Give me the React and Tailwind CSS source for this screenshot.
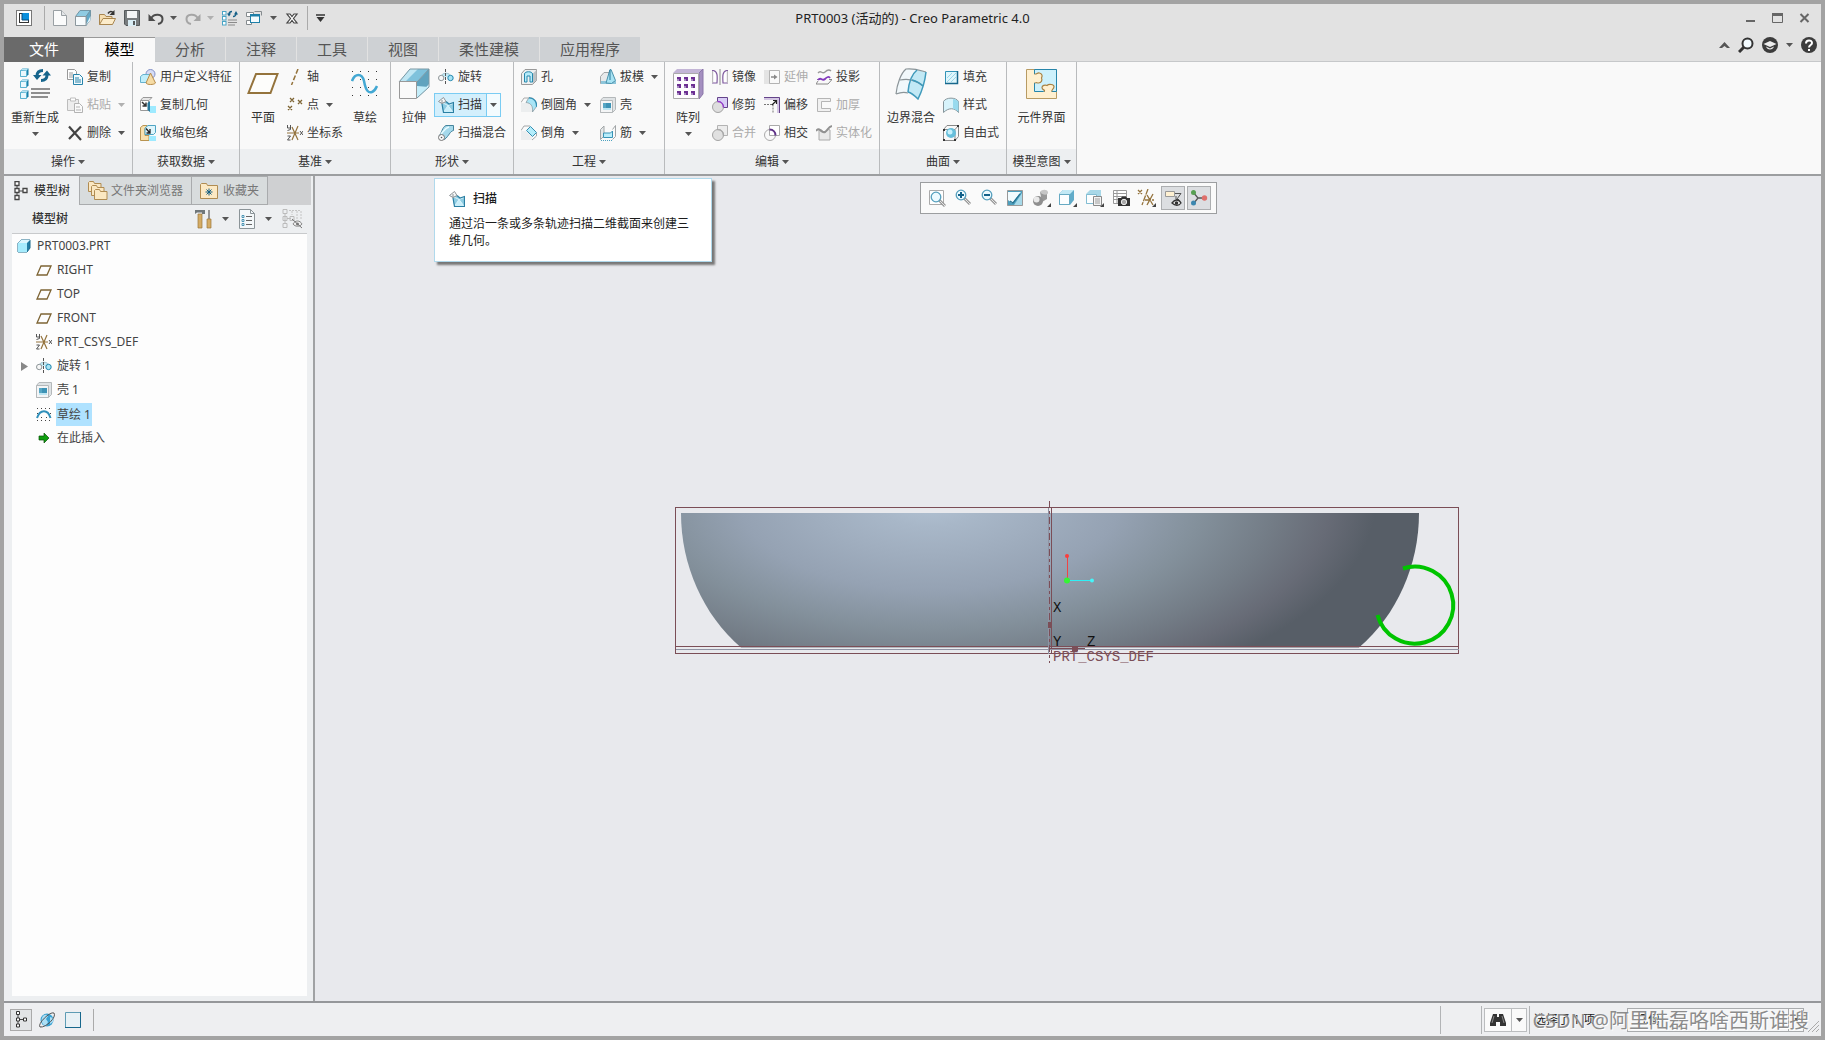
import React from "react";

const Svg = ({ w = 16, h = 16, children, ...rest }) => (
  <svg width={w} height={h} viewBox={`0 0 ${w} ${h}`} fill="none" className="shrink-0" aria-hidden="true" {...rest}>
    {children}
  </svg>
);

const Caret = ({ dim }) => (
  <Svg w={7} h={4}>
    <path d="M0 0h7L3.5 4z" fill={dim ? "#b0b0b0" : "#555"} />
  </Svg>
);

/* ---------- title bar icons ---------- */
const AppIcon = () => (
  <Svg>
    <rect x=".5" y=".5" width="15" height="15" fill="#fff" stroke="#777" />
    <rect x="3.5" y="3.5" width="9" height="9" fill="#fff" stroke="#333" />
    <path d="M6 3h7v7H6z" fill="#0a8fdc" />
    <path d="M6 3v7h7" stroke="#0c4a78" />
  </Svg>
);
const NewIcon = () => (
  <Svg w={14} h={16}>
    <path d="M.5.5h8l5 5v10H.5z" fill="#fbfbfb" stroke="#9aa0a4" />
    <path d="M8.5.5v5h5" fill="#e4e6e8" stroke="#9aa0a4" />
  </Svg>
);
const CubeOpen = () => (
  <Svg>
    <path d="M.5 6.500 5 .500h10.500L11 6.500z" fill="#8fcbe2" stroke="#7296a6" />
    <path d="M11 6.500 15.500.500v9L11 15.500z" fill="#62a9c8" stroke="#7296a6" />
    <path d="M.5 6.500H11v9H.5z" fill="#f7fbfd" stroke="#8c979d" />
    <path d="M11 15 15.500 6v4z" fill="#e6f6fc" />
  </Svg>
);
const FolderOpen = () => (
  <Svg w={17} h={16}>
    <path d="M.5 14.500v-10h5l1.500 2h6v8z" fill="#f5ddb0" stroke="#a98650" />
    <path d="M.5 14.500 4 8.500h12.500l-3 6z" fill="#fceccb" stroke="#a98650" />
    <path d="M9 3.500c1.500-2.500 4-2.500 5.500-.5" stroke="#333" strokeWidth="1.500" />
    <path d="M15.500 0v5h-5z" fill="#333" />
  </Svg>
);
const SaveIcon = () => (
  <Svg>
    <path d="M.5.5h15v15H2L.5 14z" fill="#787c7e" stroke="#55595b" />
    <path d="M3 1h10v7H3z" fill="#f4f5f6" />
    <path d="M4 10h8v6H4z" fill="#d9edf5" />
    <path d="M9 11h2v4H9z" fill="#55595b" />
  </Svg>
);
const Undo = ({ flip, color }) => (
  <Svg>
    <g transform={flip ? "translate(16 0) scale(-1 1)" : undefined}>
      <path d="M3 8.500C6 3 14.500 4 14.500 9c0 3-2 4.500-4.500 5" stroke={color} strokeWidth="2" />
      <path d="M.5 4v7h7z" fill={color} />
    </g>
  </Svg>
);
const RegenSmall = () => (
  <Svg>
    {[1, 6, 11].map((y) => (
      <rect key={y} x=".5" y={y + 0.5} width="3.500" height="3.500" fill="#fff" stroke="#4aa5c6" />
    ))}
    <path d="M6 10h9M6 12.500h9M6 15h7" stroke="#8a8a8a" />
    <path d="M7 4a3 3 0 0 1 3-2.500M14 4a3 3 0 0 1-3 2.500" stroke="#145f86" strokeWidth="1.500" />
    <path d="M5 3.500h4L7 6.500zM12 4.500h4L14 1z" fill="#145f86" />
  </Svg>
);
const Windows = () => (
  <Svg>
    <path d="M.5 2.500h7v4h-7zM.5 10.500h5v4h-5z" fill="#fff" stroke="#858b8e" />
    <path d="M8.500 1.500h7v4" stroke="#858b8e" />
    <rect x="4.500" y="4.500" width="9" height="8" fill="#f3fbfe" stroke="#1d7fa8" />
    <path d="M4 5h10v1.500H4z" fill="#1d7fa8" />
  </Svg>
);
const CloseWin = () => (
  <Svg w={14} h={14}>
    <path d="M2 3h3l2 2.500L9 3h3L8.500 7.500 12 12H9L7 9.500 5 12H2l3.500-4.500z" fill="#fff" stroke="#444" strokeWidth="1.200" />
  </Svg>
);

/* ---------- ribbon: large icons ---------- */
const MiniCube = ({ x = 0, y = 0 }) => (
  <g transform={`translate(${x} ${y})`}>
    <path d="M.5 2.500 2.500.5h6v6l-2 2h-6z" fill="#1b80a8" />
    <path d="M.5 2.500h6v6h-6z" fill="#e9f8fd" stroke="#5bb2d0" />
    <path d="M1 2 2.500.5h6L6.500 2.500z" fill="#b6e4f3" />
  </g>
);
const Regen = () => (
  <Svg w={32} h={32}>
    <MiniCube y={0} x={1} />
    <MiniCube y={11} x={1} />
    <MiniCube y={22} x={1} />
    <path d="M12 21h19M12 25h19M12 29h17" stroke="#8f8f8f" strokeWidth="2" />
    <path d="M18 8c0-3.500 2-5.500 6-5.500M28 7c0 3.500-2 5.500-6 5.500" stroke="#16658c" strokeWidth="3" />
    <path d="M14 7h8.500L18 12zM23.500 7.500H32l-4-5z" fill="#16658c" />
  </Svg>
);
const Plane = () => (
  <Svg w={32} h={32}>
    <path d="M9 6h21.500l-7 19H1.500z" fill="#fdfdfb" stroke="#94733c" strokeWidth="2" />
  </Svg>
);
const dots = [0, 1, 2, 3].flatMap((r) => [0, 1, 2, 3].map((c) => [c, r]));
const SketchLarge = () => (
  <Svg w={28} h={28}>
    {dots.map(([c, r]) => (
      <rect key={`${c}-${r}`} x={1 + c * 8} y={1 + r * 8} width="1" height="1" fill="#333" />
    ))}
    <path d="M1 11C4 3 11 3 13 11c2 11 5 12 8 11 3-1 4-4 5-6" stroke="#43a8d3" strokeWidth="2.500" />
  </Svg>
);
const Extrude = () => (
  <Svg w={32} h={32}>
    <path d="M1 14 12 1h19L19 14z" fill="#7fc2dc" />
    <path d="M1 14 12 1h8L7 14z" fill="#bfe6f3" />
    <path d="M19 14 31 1v18L19 30z" fill="#60a3be" />
    <path d="M19 30 31 16v3z" fill="#e1f6fd" />
    <path d="M19 18 31 19 19 30z" fill="#c5eefa" />
    <path d="M1 14 12 1h19v18L19 30M19 14 31 1" stroke="#7a98a4" />
    <path d="M1.500 13.500h17v17h-17z" fill="#fafafa" stroke="#999" />
  </Svg>
);
const Pattern = () => (
  <Svg w={32} h={32}>
    <path d="M1 5 5 1h26l-4 4z" fill="#c3b5d6" />
    <path d="M27 5 31 1v25l-4 5z" fill="#a48fc0" stroke="#8b76a9" />
    <path d="M1.500 5.500h25v25h-25z" fill="#fdfcfe" stroke="#aaa" />
    {[9, 16, 23].flatMap((y) =>
      [5, 12, 19].map((x) => <path key={`${x}${y}`} d={`M${x} ${y}h4v4h-2v-2h-2z`} fill="#6c2f93" />)
    )}
    {[9, 16, 23].flatMap((y) =>
      [5, 12, 19].map((x) => <path key={`s${x}${y}`} d={`M${x} ${y + 2}h2v2h-2z`} fill="#a88cc2" />)
    )}
  </Svg>
);
const Blend = () => (
  <Svg w={34} h={32}>
    <path d="M2 26C3 16 7 5 12 1c8-1 13 1 20 3-1 9-4 19-8 27-6-6-13-8-22-5z" fill="#f1f8fb" />
    <path d="M14 24C15 13 18 6 23 2l9 2c-1 9-4 19-8 27-3-3-6-6-10-7z" fill="#c2e9f5" />
    <path d="M2 26C3 16 7 5 12 1c8-1 13 1 20 3M6 12c9-2 16 0 23 6M2 26c5-2 9-2 12-1" stroke="#8b9498" strokeWidth="1.200" />
    <path d="M14 24c4 1 7 4 10 7 4-8 7-18 8-27M14 24C15 13 18 6 23 2M18 12c4 1 8 3 11 6" stroke="#3f9abb" strokeWidth="1.500" />
  </Svg>
);
const Puzzle = () => (
  <Svg w={32} h={32}>
    <path d="M1.500 1.500h30v29h-30z" fill="#fff0d0" stroke="#b89b63" />
    <path d="M9.500 1.500h22v22h-5v0h-8v0h-9z" fill="#cdf1fc" stroke="#2785aa" />
    <path d="M9.500 6c2 1 3-2 5-1 3 1 3 3 2 5 1 2 0 5-3 5-2 0-2-1-4 0M19 23.500c2-2-2-1-2-4 0-2 3-3 5-2 2-2 7-1 7 1 0 3-3 3-2 5" fill="#fff0d0" stroke="#a98242" strokeWidth="1.200" />
    <path d="M9.500 6.500v8M20 23.500h6" stroke="#fff0d0" strokeWidth="2" />
  </Svg>
);

/* ---------- ribbon: small icons ---------- */
const Copy = () => (
  <Svg>
    <path d="M.5.5h7l2 2v8h-9z" fill="#fff" stroke="#999" />
    <path d="M2 4h4M2 6h4M2 8h4" stroke="#999" />
    <path d="M6.500 5.500h6l3 3v7h-9z" fill="#f2fafd" stroke="#2683aa" />
    <path d="M8 9h4M8 11h6M8 13h6" stroke="#2683aa" />
  </Svg>
);
const Paste = () => (
  <Svg>
    <path d="M.5 2.500h11v11H.5z" fill="#ededed" stroke="#bdbdbd" />
    <path d="M3.500 1h5v3h-5z" fill="#fff" stroke="#bdbdbd" />
    <path d="M7.500 6.500h5l3 3v6h-8z" fill="#fafafa" stroke="#b3b3b3" />
    <path d="M9 10h4M9 13h5" stroke="#b3b3b3" />
  </Svg>
);
const Delete = () => (
  <Svg>
    <path d="M2 1.500 14 15M14 1.500 2 14" stroke="#444" strokeWidth="2.200" />
  </Svg>
);
const Udf = () => (
  <Svg>
    <circle cx="10.500" cy="5" r="4.500" fill="#d5dcf6" stroke="#8290c6" />
    <path d="M.5 7.500 3 5.500h7v6l-2 2H.5z" fill="#bfeefb" stroke="#66b2cf" />
    <path d="M10.500 4 6 14c1 2 8 2 9.500 0z" fill="#f6dca5" stroke="#b68b4a" />
  </Svg>
);
const CopyGeom = () => (
  <Svg>
    <path d="M.5 3.500 3 .5h9l-3 3z" fill="#e6e6e6" stroke="#999" />
    <path d="M.5 3.500h8v10h-8z" fill="#fff" stroke="#999" />
    <path d="M2 5l4 4M6 5.500V9H2.500" stroke="#333" strokeWidth="1.500" />
    <path d="M10 9h6v7h-6z" fill="#9eeaff" />
    <path d="M7.500 6 10 4v11l-2.500-2z" fill="#27799d" />
  </Svg>
);
const Shrink = () => (
  <Svg>
    <path d="M.5 2.500 3 .5h4v3H5v7h4v5H.5z" fill="#f8e0ad" stroke="#b99451" />
    <path d="M5 3 8 .5h7.500v7l-2 2H5z" fill="#def5fc" stroke="#4ea4c3" />
    <path d="M6 3.500 10 8M10 4v4H6.500" stroke="#222" strokeWidth="1.300" />
    <path d="M9 11h7v5H9z" fill="#9eeaff" />
  </Svg>
);
const Axis = () => (
  <Svg>
    <path d="M11 0 4.500 16" stroke="#94733c" strokeWidth="1.500" strokeDasharray="5 2" />
  </Svg>
);
const Points = () => (
  <Svg>
    <path d="M3 1l4 4M7 1 3 5M11 3l4 4M15 3l-4 4M1 9l4 4M5 9l-4 4" stroke="#7e6534" strokeWidth="1.300" />
  </Svg>
);
const Csys = () => (
  <Svg>
    <path d="M0 8h12M5 2l6 13M11 1 5 15" stroke="#94733c" strokeWidth="1.200" />
    <path d="M.5 0v3h3M3.500 0v4.500l-3 1M13 6l3 4M16 6l-3 4M.5 11h3l-3 4h3" stroke="#444" strokeWidth=".9" />
  </Svg>
);
const Revolve = () => (
  <Svg>
    <path d="M3 8c0-5 10-5 10 0" fill="#c3eaf5" stroke="#9fc2ce" />
    <circle cx="3.200" cy="9" r="2.700" fill="#f7f7f7" stroke="#8e9699" />
    <circle cx="12.500" cy="9" r="2.700" fill="#a8e4f5" stroke="#2387ae" />
    <path d="M7.500 0v16" stroke="#555" strokeDasharray="3 1" />
  </Svg>
);
const Sweep = () => (
  <Svg>
    <path d="M4 5.500 8 4.500l3 3 4.500-1.500v9.500H5.500L4 10z" fill="#8fcde3" />
    <path d="M10 8.500 15 15H6z" fill="#c9eefa" />
    <path d="M4 5.500 10 8.500 15 6.500M10 8.500 5.500 15M10 8.500l5 6.500" stroke="#e7f9fe" strokeWidth=".8" />
    <path d="M8 4.500l3 2.500 4.500-1.500v10h-10L4 7" stroke="#2a7fa3" strokeWidth="1.200" />
    <path d="M.5 4.500 5.500.5 8 4.500 4 6.500z" fill="#f6f8f9" stroke="#8e9396" />
    <path d="M4 3v4" stroke="#8e9396" />
  </Svg>
);
const SweptBlend = () => (
  <Svg>
    <path d="M1 11C4 8 4 2 8 .5h7.500v5c-4 1-4 5-9 9z" fill="#a5d9eb" stroke="#46849c" />
    <path d="M3 9c3-3 4-6 8-7" stroke="#e8fbff" strokeWidth="1.500" />
    <circle cx="3.500" cy="12.500" r="3" fill="#fafafa" stroke="#777" />
    <circle cx="3.500" cy="12.500" r=".8" fill="#555" />
  </Svg>
);
const Hole = () => (
  <Svg>
    <path d="M.5 4.500 4 .5h11.500v11l-4 4H.5z" fill="#eef0f1" stroke="#999" />
    <path d="M11.500 5 15.500 1v10l-4 4z" fill="#bcc2c5" />
    <path d="M3.500 13V5c0-3 8-3 8 0v8H9V7H6v6z" fill="#b6ebfa" stroke="#2788ad" />
  </Svg>
);
const Round = () => (
  <Svg>
    <path d="M0 6h7c3 1 4 4 4 9H0z" fill="#eceeef" />
    <path d="M0 5.500 3 1h5" stroke="#aaa" />
    <path d="M5 5.500 8 .5c5 0 8 4 7.500 9L11.500 15C12 9 10 6 5 5.500z" fill="#a9e5f6" stroke="#8a9ba2" strokeWidth=".8" />
    <path d="M8 .8c5 0 8 4 7.500 9" stroke="#318fb4" strokeWidth="1.300" />
  </Svg>
);
const Chamfer = () => (
  <Svg>
    <path d="M0 6h5l6 6v3H0z" fill="#eceeef" />
    <path d="M0 5.500 3 1h6M11 15l4.500-4V8" stroke="#a3a7a9" />
    <path d="M5.500 5.500 9.500 1.500l6 6-4 4z" fill="#b3edfb" stroke="#358fb2" />
  </Svg>
);
const Draft = () => (
  <Svg>
    <path d="M.5 7.500 4 3.500h5v11H.5z" fill="#e8eaeb" stroke="#a1a5a7" />
    <path d="M1 12h15v3H1z" fill="#8dc5da" />
    <path d="M6 14 10 .5h1l4.500 11-4 3z" fill="#a8e3f4" stroke="#4a91ab" />
    <path d="M10 1v10" stroke="#2a7898" />
  </Svg>
);
const Shell = () => (
  <Svg>
    <path d="M.5 3.500 3 .5h12.500v12l-3 3H.5z" fill="#dfe3e5" stroke="#b4b8ba" />
    <path d="M.5 3.500h12v12H.5z" fill="#f4f5f6" stroke="#b4b8ba" />
    <path d="M3 6h8v7H3z" fill="#57a6c4" />
    <path d="M6 6h5v5H6z" fill="#3d93b6" />
    <path d="M3 11h8v2H3z" fill="#bce4f1" />
  </Svg>
);
const Rib = () => (
  <Svg>
    <path d="M.5 4.500 4 1v10L.5 14.500z" fill="#e4e7e8" stroke="#a1a5a7" />
    <path d="M12.500 4.500l3-4v11l-3 3" stroke="#a1a5a7" />
    <path d="M3.500 12.500V8h7l2-2v6.500z" fill="#b9edfa" stroke="#3892b5" />
    <path d="M1 15.500h12" stroke="#4da2c0" strokeDasharray="1 1" />
  </Svg>
);
const Mirror = () => (
  <Svg>
    <path d="M.5 1.500h1c4 1 4 5 3.500 12.500H.5zM15.500 1.500h-1c-4 1-4 5-3.500 12.500h4.500z" fill="#fff" stroke="#7f5a9f" strokeWidth="1.200" />
    <path d="M.5 2v12M15.500 2v12" stroke="#bbb" />
    <path d="M8 0v16" stroke="#888" />
  </Svg>
);
const Trim = ({ gray }) => (
  <Svg>
    <path d="M5.500.5h10v10h-10z" fill={gray ? "#ececec" : "#d8ccf6"} stroke={gray ? "#b3b3b3" : "#64438a"} />
    <circle cx="6" cy="10" r="5.500" fill={gray ? "#e0e0e0" : "#dedede"} stroke="#a3a3a3" />
    <path d="M5.500 4.500c4 0 6 3 6 6" stroke={gray ? "#aaa" : "#9435cf"} strokeWidth="1.500" />
  </Svg>
);
const Extend = () => (
  <Svg>
    <path d="M0 1h6v14H0z" fill="#e4e4e4" />
    <path d="M5.500 1.500h10v13h-10z" stroke="#b3b3b3" />
    <path d="M7 8h4" stroke="#888" strokeWidth="1.500" />
    <path d="M10 5.500l3.500 2.500-3.500 2.500z" fill="#888" />
  </Svg>
);
const Offset = () => (
  <Svg>
    <path d="M0 0h16v16h-3V3H0z" fill="#d3c6e2" />
    <path d="M0 .5h15.500V16" stroke="#64438a" />
    <path d="M0 7.500h9V16" stroke="#777" strokeDasharray="2 1" />
    <path d="M8 8l4-4M9 3.500h3.500V7" stroke="#222" strokeWidth="1.200" />
  </Svg>
);
const Intersect = () => (
  <Svg>
    <path d="M5.500.5h10v10h-10z" fill="#fff" stroke="#aaa" />
    <circle cx="6" cy="10" r="5.500" stroke="#aaa" />
    <path d="M5.500 4.500c4 0 6 3 6 6" stroke="#5f3187" strokeWidth="2" />
  </Svg>
);
const Project = () => (
  <Svg>
    <path d="M2 4c3-4 4 2 7-1 2-2 4-3 6-1" stroke="#999" strokeWidth="1.300" />
    <path d="M1 10.500h3M13 10.500h3l-4 4.500H0l2-3" stroke="#888" />
    <path d="M2 11c3-4 4 2 7-1 2-2 4-3 5-1" stroke="#8339bd" strokeWidth="1.800" />
  </Svg>
);
const Thicken = () => (
  <Svg>
    <path d="M1.500 1.500h13v3h-9v7h9v3h-13z" fill="#f1f1f1" stroke="#b5b5b5" />
  </Svg>
);
const Solidify = () => (
  <Svg>
    <path d="M3 5v10h11V5c-3-2-3 4-6 2-2-2-3-3-5-2z" fill="#e9e9e9" stroke="#aaa" />
    <path d="M0 6c4-5 5 3 9 1 3-2 3-5 7-6" stroke="#919191" strokeWidth="2" />
  </Svg>
);
const Fill = () => (
  <Svg>
    <path d="M2.500 2.500h12v12h-12z" fill="#dff6fc" stroke="#3293b7" />
    <path d="M4 9l5-5M4 13l9-9M8 13l5-5" stroke="#9ad6e9" />
    <path d="M2 14.500h12.500V2" stroke="#17678c" strokeWidth="1.500" />
  </Svg>
);
const Style = () => (
  <Svg>
    <path d="M.5 4.500C3 0 13 0 15.500 4.500v11c-4-5-10-5-15 0z" fill="#d7f3fb" stroke="#87969c" />
    <path d="M10 2c3 0 5 2 5.500 3v10c-2-2-3-3-5.500-3z" fill="#98daee" />
  </Svg>
);
const Freestyle = () => (
  <Svg>
    <path d="M.5 4.500 4 .5h11.500v11l-3.500 4H.5zM.5 4.500H12v11M12 4.500l3.500-4" stroke="#888" />
    <circle cx="8" cy="8" r="5" fill="#68bfdb" />
    <circle cx="7" cy="7" r="2.500" fill="#c9f2fd" />
    <path d="M0 4h2v2H0zM0 14h2v2H0zM11 14h2v2h-2zM14 0h2v2h-2z" fill="#333" />
  </Svg>
);

/* ---------- tree icons ---------- */
const TreeGlyph = ({ c = "#444" }) => (
  <Svg w={14} h={20}>
    <path d="M3 5v9M5 10h4" stroke={c} />
    <path d="M1 .5h4v4H1zM1 7.500h4v4H1zM1 14.500h4v4H1zM9 7.500h4v4H9z" fill="#fff" stroke={c} strokeWidth="1.300" />
  </Svg>
);
const Folders = () => (
  <Svg w={20} h={20}>
    {[[0, 0], [3, 4], [6, 8]].map(([x, y]) => (
      <path key={x} transform={`translate(${x} ${y})`} d="M.5 10.500v-9l1-1h4l1 2h6.500v8z" fill="#fbe8c2" stroke="#b08c52" />
    ))}
  </Svg>
);
const Favorite = () => (
  <Svg w={18} h={16}>
    <path d="M.5 15.500V1.500l1-1h5l1 2h10v13z" fill="#fce9c4" stroke="#b08c52" />
    <path d="M9 5.500v7M5.500 9h7M6.500 6.500l5 5M11.500 6.500l-5 5" stroke="#155f82" />
  </Svg>
);
const Tools = () => (
  <Svg w={18} h={20}>
    <path d="M1 1h10v4H8V3.500H3L1 5z" fill="#70777a" />
    <path d="M4 5h4v14H4z" fill="#d5ac65" stroke="#9c753a" strokeWidth=".7" />
    <path d="M15 1v10" stroke="#777" strokeWidth="1.500" />
    <path d="M13 10h4v9h-4z" fill="#d5ac65" stroke="#9c753a" strokeWidth=".7" />
  </Svg>
);
const ListIcon = () => (
  <Svg w={16} h={20}>
    <path d="M.5.5h11l4 4v15H.5z" fill="#f4f8fa" stroke="#8b9498" />
    <path d="M11.500.5v4h4" stroke="#8b9498" />
    <path d="M7 7.500h6M7 11.500h6M7 15.500h6" stroke="#666" />
    <path d="M3 6.500h2v2H3zM3 10.500h2v2H3zM3 14.500h2v2H3z" stroke="#2a81a7" strokeWidth=".8" />
  </Svg>
);
const HideTree = () => (
  <Svg w={21} h={20}>
    <path d="M3 5v9M5 9.500h4" stroke="#bbb" />
    <path d="M1 .5h4v4H1zM1 7.500h4v4H1zM1 14.500h4v4H1zM8 7.500h4v4H8z" stroke="#bbb" />
    <path d="M7 1.500h12M10 2v4M19 2v8M15 2v8" stroke="#c4c4c4" strokeDasharray="2 1" />
    <path d="M11 15c2-4 7-4 9 0-2 3-7 3-9 0z" fill="#eee" stroke="#888" />
    <circle cx="15.500" cy="15" r="1.500" fill="#777" />
    <path d="M10 10l10 9" stroke="#777" />
  </Svg>
);
const PartCube = () => (
  <Svg w={14} h={14}>
    <path d="M1 4 4 1h9v8l-3 4H1z" fill="#237fa5" stroke="#1b6a8c" />
    <path d="M1 4 4 1h9l-3 3z" fill="#ddf7fe" />
    <path d="M1 4h9v9H1z" fill="#a6ecfd" />
  </Svg>
);
const PlaneSmall = () => (
  <Svg>
    <path d="M5 4h10l-4 9H1z" stroke="#7d6434" strokeWidth="1.300" />
  </Svg>
);
const SketchSmall = () => (
  <Svg>
    {[1, 5, 9, 13].map((x) => (
      <path key={x} d={`M${x} 2h1v1h-1zM${x} 14h1v1h-1z`} fill="#444" />
    ))}
    <path d="M1 7h1v1H1zM14 7h1v1h-1zM5 11h1v1H5zM10 11h1v1h-1z" fill="#444" />
    <path d="M1 12C4 3 12 3 14.500 12" stroke="#2f8fba" strokeWidth="2" />
  </Svg>
);
const InsertArrow = () => (
  <Svg>
    <path d="M3 6h5V3l5 5-5 5v-3H3z" fill="#0f9f0f" stroke="#0a4f0a" strokeWidth=".7" />
  </Svg>
);

/* ---------- ribbon building blocks ---------- */
const Item = ({ icon, label, caret, disabled }) => (
  <button disabled={disabled} className={`flex h-6 items-center gap-1 whitespace-nowrap ${disabled ? "text-[#ababab]" : "text-[#3a3a3a]"}`}>
    {icon}
    <span>{label}</span>
    {caret && <span className="ml-[3px]"><Caret dim={disabled} /></span>}
  </button>
);
const Col = ({ children }) => <div className="flex flex-col items-start gap-1">{children}</div>;
const Big = ({ icon, label, caret }) => (
  <button className="flex h-20 flex-col items-center whitespace-nowrap pt-[3px]">
    {icon}
    <span className="mt-2.5 leading-4">{label}</span>
    {caret && <span className="mt-1.5"><Caret /></span>}
  </button>
);
const Group = ({ title, width, pad, children }) => (
  <section className={`relative flex shrink-0 flex-col border-r border-[#b9bbbd] ${width}`}>
    <div className={`flex h-[87px] items-start pt-[3px] ${pad}`}>{children}</div>
    <button className="flex h-[25px] items-center justify-center gap-[3px] bg-[#edeff1]">
      {title}
      <Caret />
    </button>
  </section>
);

const tabs = [
  ["分析", "w-[70px]"], ["注释", "w-[70px]"], ["工具", "w-[70px]"], ["视图", "w-[70px]"],
  ["柔性建模", "w-[100px]"], ["应用程序", "w-[100px]"],
];

const tree = [
  [<PlaneSmall />, "RIGHT"], [<PlaneSmall />, "TOP"], [<PlaneSmall />, "FRONT"],
  [<Csys />, "PRT_CSYS_DEF"], [<Revolve />, "旋转 1", "expand"], [<Shell />, "壳 1"],
  [<SketchSmall />, "草绘 1", "selected"], [<InsertArrow />, "在此插入"],
];

/* ---------- view toolbar icons ---------- */
const Lens = ({ x = 6, y = 6, sign }) => (
  <g>
    <path d={`M${x + 3} ${y + 3}l6 6`} stroke="#999" strokeWidth="3" />
    <path d={`M${x + 4} ${y + 4}l5 5`} stroke="#e4e4e4" strokeWidth="1" />
    <circle cx={x} cy={y} r="4.800" fill="#edfaff" stroke="#559fbd" strokeWidth="1.300" />
    {sign && <path d={`M${x - 3} ${y}h6`} stroke="#12618a" strokeWidth="2" />}
    {sign === "plus" && <path d={`M${x} ${y - 3}v6`} stroke="#12618a" strokeWidth="2" />}
  </g>
);
const Corner = () => <path d="M19 14v4h-4z" fill="#444" />;
const viewIcons = [
  <Svg w={18} h={18}><path d="M1.500 1.500h14v14h-14z" fill="#fff" stroke="#aaa" /><Lens x={8} y={8} /></Svg>,
  <Svg w={18} h={18}><Lens sign="plus" x={7} y={6} /></Svg>,
  <Svg w={18} h={18}><Lens sign="minus" x={7} y={6} /></Svg>,
  <Svg w={18} h={18}><path d="M1.500 1.500h15v15h-15z" fill="#4d9fbd" stroke="#999" /><path d="M2 3h13C12 6 8 12 6 14l-4-3z" fill="#f2fbfe" /><path d="M8 16 16 4v12z" fill="#a7d9e9" /><path d="M4 12l3 2 7-9" stroke="#246f8e" strokeWidth="1.200" /></Svg>,
  <Svg w={19} h={18}><path d="M8 3 15 2v8l-5 3z" fill="#989898" /><path d="M8 3c2-3 7-3 8 0s-5 4-8 0z" fill="#c6c6c6" /><circle cx="6" cy="12" r="5" fill="#8f8f8f" /><circle cx="4.500" cy="10.500" r="3" fill="#e9e9e9" /><Corner /></Svg>,
  <Svg w={19} h={18}><path d="M1 5 5 1h11v10l-4 5H1z" fill="#62acc9" /><path d="M1 5 5 1h11l-4 4z" fill="#c2e9f5" /><path d="M1.500 5.500h10v10h-10z" fill="#fcfeff" stroke="#67aac3" /><Corner /></Svg>,
  <Svg w={19} h={18}><path d="M1 5 5 1h11v10l-4 4H1z" fill="#a8d8e8" /><path d="M1.500 5.500h10v9h-10z" fill="#fcfeff" stroke="#83bdd2" /><path d="M8.500 7.500h8v9h-8z" fill="#f3f3f3" stroke="#888" /><path d="M10 10h5M10 12h5M10 14h5" stroke="#888" strokeWidth=".8" /><Corner /></Svg>,
  <Svg w={18} h={18}><path d="M1.500 1.500h13v13h-13zM1 4.500h13M1 7.500h13M1 10.500h13M5 1v13" fill="#fff" stroke="#9a9a9a" /><path d="M6 9h3l1-1.500h4L15 9h3v8H6z" fill="#333" /><circle cx="12" cy="13" r="2.700" fill="#aaa" stroke="#eee" /></Svg>,
  <Svg w={19} h={18}><path d="M1 1l4 4M5 1 1 5M11 0 5 16M8 11h9M10 6l6 10M16 5l-6 11" stroke="#94733c" strokeWidth="1.300" strokeDasharray="6 1" /><Corner /></Svg>,
  <Svg w={18} h={18}><path d="M1.500 2.500h9v5h-9z" fill="#fff1d2" stroke="#999" /><path d="M11 4.500h6L13 10M12 7v3.500h3" stroke="#555" /><path d="M8 14c3-4 7-4 9 0-2 3-6 3-9 0z" fill="#fff" stroke="#333" strokeWidth="1.300" /><circle cx="12.500" cy="14" r="1.800" fill="#333" /></Svg>,
  <Svg w={18} h={18}><path d="M3 3l5 6-4 5M8 9h6" stroke="#555" strokeWidth="1.300" /><circle cx="3.500" cy="3.500" r="2.500" fill="#58a052" /><circle cx="3.500" cy="14" r="2.500" fill="#3b87af" /><circle cx="14.500" cy="9" r="2.700" fill="#df6f6b" /></Svg>,
];
const viewNames = ["重新调整", "放大", "缩小", "重画", "渲染", "显示样式", "已保存方向", "视图管理器", "基准显示", "注释显示", "旋转中心"];

function TitleBar() {
  return (
    <header className="grid h-[33px] shrink-0 grid-cols-[1fr_auto_1fr] items-center pb-[5px]">
      <div className="flex items-center gap-2 pl-3">
        <AppIcon />
        <i className="ml-1 h-6 w-px bg-[#aaa]" />
        <NewIcon /><CubeOpen /><FolderOpen /><SaveIcon />
        <div className="flex items-center gap-1.5"><Undo color="#4b4b4b" /><Caret /></div>
        <div className="flex items-center gap-1.5"><Undo flip color="#a5a5a5" /><Caret dim /></div>
        <RegenSmall /><Windows /><Caret /><CloseWin />
        <i className="h-6 w-px bg-[#aaa]" />
        <Svg w={9} h={8}><path d="M0 1h9" stroke="#333" strokeWidth="1.500" /><path d="M.5 3h8L4.500 8z" fill="#333" /></Svg>
      </div>
      <h1 className="text-[13px] leading-5 text-[#222]">PRT0003 (活动的) - Creo Parametric 4.0</h1>
      <div className="flex items-center justify-end gap-4 pr-[11px]">
        <button aria-label="最小化"><Svg w={11} h={12}><path d="M1 8h9v2H1z" fill="#666" /></Svg></button>
        <button aria-label="最大化"><Svg w={11} h={12}><path d="M.5 2h10v8.500H.5z" stroke="#666" /><path d="M0 1h11v3H0z" fill="#666" /></Svg></button>
        <button aria-label="关闭"><Svg w={11} h={12}><path d="M1.500 2 9.500 10M9.500 2 1.500 10" stroke="#666" strokeWidth="2" /></Svg></button>
      </div>
    </header>
  );
}

function TabBar() {
  return (
    <nav className="flex h-[25px] shrink-0 items-stretch border-b border-[#c6c8ca] text-[15px] leading-[22px] text-[#555]">
      <button className="-mb-px w-20 bg-[#6a6a6a] pb-0.5 text-white">文件</button>
      <button className="-mb-px w-[71px] border-t border-[#999] bg-[#f9f9f9] pb-0.5 text-black">模型</button>
      <div className="flex gap-px">
        {tabs.map(([t, w]) => (
          <button key={t} className={`bg-[#ced1d4] pb-px ${w}`}>{t}</button>
        ))}
      </div>
      <div className="ml-auto flex items-center gap-2 pb-3 pr-1 pt-1">
        <Svg w={11} h={6}><path d="M0 6 5.500 0 11 6H8L5.500 4 3 6z" fill="#555" /></Svg>
        <Svg><circle cx="9.500" cy="6.500" r="5" fill="#f3fbff" stroke="#333" strokeWidth="2" /><path d="M6 10l-5 5" stroke="#333" strokeWidth="3" /></Svg>
        <Svg><circle cx="8" cy="8" r="8" fill="#3c3c3c" /><path d="M1.500 7 8 4l6.500 3L8 10z" fill="#eee" /><path d="M4 9.500c1 4 7 4 8 0l-4 2z" fill="#eee" /></Svg>
        <Caret />
        <Svg><circle cx="8" cy="8" r="8" fill="#3c3c3c" /><path d="M5 6.500C5 2.500 11 2.500 11 6c0 2-3 2-3 4.500" stroke="#fff" strokeWidth="2" /><path d="M7 12h2v2H7z" fill="#fff" /></Svg>
      </div>
    </nav>
  );
}

function Tooltip() {
  return (
    <div role="tooltip" className="absolute left-[43px] top-full z-10 mt-1 w-[278px] border border-[#b0d9ec] bg-white px-3.5 pb-3 pt-2.5 text-[#1c1c1c] shadow-[3px_3px_2px_#777]">
      <div className="flex items-center gap-2 leading-5">
        <Sweep />
        <strong className="font-medium">扫描</strong>
      </div>
      <p className="mt-1.5 leading-[17px]">通过沿一条或多条轨迹扫描二维截面来创建三维几何。</p>
    </div>
  );
}

function Ribbon() {
  return (
    <div className="flex shrink-0 border-b-2 border-[#9c9ea0] bg-[#f9f9f9]">
      <Group title="操作" width="w-[129px]" pad="gap-2 pl-[7px]">
        <Big icon={<Regen />} label="重新生成" caret />
        <Col>
          <Item icon={<Copy />} label="复制" />
          <Item icon={<Paste />} label="粘贴" caret disabled />
          <Item icon={<Delete />} label="删除" caret />
        </Col>
      </Group>
      <Group title="获取数据" width="w-[107px]" pad="pl-[7px]">
        <Col>
          <Item icon={<Udf />} label="用户定义特征" />
          <Item icon={<CopyGeom />} label="复制几何" />
          <Item icon={<Shrink />} label="收缩包络" />
        </Col>
      </Group>
      <Group title="基准" width="w-[151px]" pad="gap-2 pl-[7px]">
        <Big icon={<Plane />} label="平面" />
        <Col>
          <Item icon={<Axis />} label="轴" />
          <Item icon={<Points />} label="点" caret />
          <Item icon={<Csys />} label="坐标系" />
        </Col>
        <Big icon={<div className="flex h-8 items-center"><SketchLarge /></div>} label="草绘" />
      </Group>
      <Group title="形状" width="w-[123px]" pad="gap-1 pl-[7px]">
        <Big icon={<Extrude />} label="拉伸" />
        <Col>
          <div className="pl-1"><Item icon={<Revolve />} label="旋转" /></div>
          <div className="flex h-6 items-stretch border border-[#7accf3] bg-[#d3effc] text-[#333]">
            <button className="flex w-[51px] items-center gap-1 pl-[3px]"><Sweep />扫描</button>
            <button aria-label="扫描选项" className="flex w-3.5 items-center justify-center border-l border-[#7accf3] bg-[#f3fbfe]"><Caret /></button>
          </div>
          <div className="pl-1"><Item icon={<SweptBlend />} label="扫描混合" /></div>
        </Col>
        <Tooltip />
      </Group>
      <Group title="工程" width="w-[151px]" pad="justify-between pl-[7px] pr-1.5">
        <Col>
          <Item icon={<Hole />} label="孔" />
          <Item icon={<Round />} label="倒圆角" caret />
          <Item icon={<Chamfer />} label="倒角" caret />
        </Col>
        <Col>
          <Item icon={<Draft />} label="拔模" caret />
          <Item icon={<Shell />} label="壳" />
          <Item icon={<Rib />} label="筋" caret />
        </Col>
      </Group>
      <Group title="编辑" width="w-[215px]" pad="gap-2 pl-[7px]">
        <Big icon={<Pattern />} label="阵列" caret />
        <Col>
          <Item icon={<Mirror />} label="镜像" />
          <Item icon={<Trim />} label="修剪" />
          <Item icon={<Trim gray />} label="合并" disabled />
        </Col>
        <Col>
          <Item icon={<Extend />} label="延伸" disabled />
          <Item icon={<Offset />} label="偏移" />
          <Item icon={<Intersect />} label="相交" />
        </Col>
        <Col>
          <Item icon={<Project />} label="投影" />
          <Item icon={<Thicken />} label="加厚" disabled />
          <Item icon={<Solidify />} label="实体化" disabled />
        </Col>
      </Group>
      <Group title="曲面" width="w-[127px]" pad="gap-2 pl-[7px]">
        <Big icon={<Blend />} label="边界混合" />
        <Col>
          <Item icon={<Fill />} label="填充" />
          <Item icon={<Style />} label="样式" />
          <Item icon={<Freestyle />} label="自由式" />
        </Col>
      </Group>
      <Group title="模型意图" width="w-[70px]" pad="justify-center">
        <Big icon={<Puzzle />} label="元件界面" />
      </Group>
    </div>
  );
}

function ModelTree() {
  return (
    <aside className="flex w-[311px] shrink-0 flex-col border-r-2 border-[#a0a2a4] bg-[#edeff1] pr-[2px]">
      <div className="flex h-[29px] shrink-0 bg-[#cfd0d2] text-[#777]">
        <button className="flex w-[75px] items-center gap-1.5 bg-[#edeff1] pl-2.5 text-[#222]"><TreeGlyph />模型树</button>
        <button className="flex w-[113px] items-center gap-[3px] border border-[#a9abad] bg-[#d8dcdd] pl-2"><Folders />文件夹浏览器</button>
        <button className="flex w-[76px] items-center gap-[5px] border border-l-0 border-[#a9abad] bg-[#d8dcdd] pl-2"><Favorite />收藏夹</button>
      </div>
      <div className="ml-2 mr-1 flex h-[29px] shrink-0 items-center border-b border-[#c8cacc] pl-5 pr-1">
        <h2 className="font-medium text-[#333]">模型树</h2>
        <div className="ml-auto flex items-center gap-2.5">
          <Tools /><Caret /><ListIcon /><Caret /><HideTree />
        </div>
      </div>
      <ul className="mb-[5px] ml-2 mr-1 flex-1 bg-[#fdfdfd] text-[#444]">
        <li className="flex h-6 items-center gap-1.5 pl-[5px]"><PartCube />PRT0003.PRT</li>
        {tree.map(([icon, label, state]) => (
          <li key={label} className="flex h-6 items-center gap-[5px] pl-[9px]">
            <span className="w-2.5 text-[#888]">
              {state === "expand" && <Svg w={7} h={9}><path d="M0 0l7 4.500L0 9z" fill="#888" /></Svg>}
            </span>
            {icon}
            <span className={state === "selected" ? "-ml-px bg-[#afe2ff] px-px leading-[23px]" : ""}>{label}</span>
          </li>
        ))}
      </ul>
    </aside>
  );
}

function BowlModel() {
  return (
    <svg width="796" height="172" viewBox="670 497 796 172" fill="none" className="mt-[283px] shrink-0" role="img" aria-label="PRT0003">
      <defs>
        <radialGradient id="shade" gradientUnits="userSpaceOnUse" cx="0" cy="0" r="1" gradientTransform="translate(930 500) scale(455 215)">
          <stop offset="0" stopColor="#b3c3d4" />
          <stop offset=".12" stopColor="#a8b7c8" />
          <stop offset=".25" stopColor="#a0aebf" />
          <stop offset=".42" stopColor="#95a2b3" />
          <stop offset=".6" stopColor="#83909b" />
          <stop offset=".76" stopColor="#737c86" />
          <stop offset=".88" stopColor="#676b76" />
          <stop offset=".98" stopColor="#575e67" />
        </radialGradient>
      </defs>
      <path d="M681 513H1419C1419 565 1397 615 1359 647.500H741C703 615 681 565 681 513Z" fill="url(#shade)" />
      <g shapeRendering="crispEdges" stroke="#7b4e57">
        <path d="M675.500 507.500h783v146h-783zM675.500 646.500h783M1051.500 507.500v146" />
        <path d="M675.500 649.500h783M1048.500 507.500v146" stroke="#9093a3" />
        <path d="M1049.500 500.500v162" strokeDasharray="7 3 3 3" />
        <path d="M1050 648.500h35" />
        <path d="M1048 622h3v5h-3zM1072 646h5v4h-5z" fill="#7b4e57" />
      </g>
      <path d="M1067.500 556v24" stroke="#ef4444" />
      <path d="M1067 580.500h25" stroke="#2ef0f5" />
      <circle cx="1067" cy="556" r="2" fill="#fb3d3d" />
      <circle cx="1067" cy="580.500" r="3" fill="#35f535" />
      <circle cx="1092" cy="580.500" r="2" fill="#45f5fa" />
      <path d="M1403 568.500A38.500 38.500 0 1 1 1377.500 615" stroke="#00c400" strokeWidth="4" />
      <g fontFamily="'Liberation Mono', monospace" fontSize="14">
        <g fill="#111">
          <text x="1053" y="612">X</text>
          <text x="1053" y="646">Y</text>
          <text x="1087" y="646">Z</text>
        </g>
        <text x="1053" y="661" fill="#7b4e57">PRT_CSYS_DEF</text>
      </g>
    </svg>
  );
}

function Canvas() {
  return (
    <main className="flex min-w-0 flex-1 flex-col items-center bg-[#e8e9ed]">
      <div className="mt-1.5 flex h-8 w-[297px] shrink-0 items-center justify-between border border-[#9c9ea0] bg-[#fafafa] px-1">
        {viewIcons.map((icon, i) => (
          <button
            key={viewNames[i]}
            aria-label={viewNames[i]}
            className={`flex size-6 items-center justify-center ${i > 8 ? "border border-[#acaeb0] bg-[#dcdee1]" : ""}`}
          >
            {icon}
          </button>
        ))}
      </div>
      <BowlModel />
    </main>
  );
}

function StatusBar() {
  return (
    <footer className="relative flex h-[35px] shrink-0 items-center border-t-2 border-[#95979a] bg-[#eeeff1] pl-1.5">
      <button aria-label="模型树" className="flex size-[22px] items-center justify-center border border-[#aaa] bg-[#e2e4e6]">
        <Svg w={11} h={17}><path d="M2 3v10M4 8.500h4" stroke="#444" /><path d="M.5.5h3v3h-3zM.5 7h3v3h-3zM.5 13h3v3h-3zM7.500 7h3v3h-3z" fill="#fff" stroke="#333" /></Svg>
      </button>
      <button aria-label="浏览器" className="ml-[7px]">
        <Svg><circle cx="8" cy="8" r="6.500" fill="#38a1d2" /><path d="M3 6c1-4 5-4 6-2L7 7l2 3-2 4C3 13 2 9 3 6zM11 5l3 1v4l-3 2z" fill="#acdff5" /><path d="M1 15C-2 12 11-1 15 1c3 4-8 15-14 14z" stroke="#555" /></Svg>
      </button>
      <button aria-label="全屏" className="ml-[10px]">
        <Svg><path d="M.5.5h15v15H.5z" fill="#e8f1f5" stroke="#5e9cb4" /><path d="M0 15.500h15.500V0" stroke="#17678c" /></Svg>
      </button>
      <i className="ml-3 h-[22px] w-px bg-[#aaa]" />
      <div className="ml-auto flex items-center">
        <i className="h-7 w-px bg-[#b2b4b6]" />
        <i className="ml-10 h-7 w-px bg-[#b2b4b6]" />
        <div className="ml-0.5 flex h-6 border border-[#bbbdbf] bg-[#fafafa]">
          <button aria-label="查找" className="flex w-[27px] items-center justify-center border-r border-[#bbbdbf]">
            <Svg><path d="M3 2h4v3h2V2h4l3 9v3h-6v-4H6v4H0v-3z" fill="#333" /><path d="M4 4l-2 7M12 4l2 7" stroke="#888" /></Svg>
          </button>
          <button aria-label="查找选项" className="flex w-3.5 items-center justify-center"><Caret /></button>
        </div>
        <i className="ml-0.5 h-7 w-px bg-[#b2b4b6]" />
        <label htmlFor="filter" className="ml-1 w-[93px] text-[#222]">选择了 1 项</label>
        <div className="relative mr-[17px]">
          <select id="filter" className="h-6 w-[177px] appearance-none border border-[#a9abad] bg-[#f5f6f7] pl-2 text-[#333]">
            <option>几何</option>
          </select>
          <span className="pointer-events-none absolute inset-y-0 right-0 flex w-4 items-center justify-center border-l border-[#a9abad]"><Caret /></span>
        </div>
      </div>
      <div className="pointer-events-none absolute right-3 top-0.5 text-xl leading-8 text-[#8c8c8c] [text-shadow:1px_1px_0_#fff]">CSDN @阿里陆磊咯啥西斯谁搜</div>
      <svg width="12" height="12" viewBox="0 0 12 12" className="absolute bottom-1 right-0.5" aria-hidden="true"><path d="M1 12 12 1M5 12l7-7M9 12l3-3" stroke="#aaa" /></svg>
    </footer>
  );
}

export default function App() {
  return (
    <div className="relative flex h-screen flex-col overflow-hidden border-4 border-[#a3a3a3] bg-[#e2e2e2] font-['Noto_Sans','Noto_Sans_CJK_SC',sans-serif] text-xs text-[#333]">
      <div className="absolute -top-1 left-[46%] flex h-px w-[241px] justify-center bg-[#eee]"><span className="w-12 bg-[#0c74d8]" /></div>
      <TitleBar />
      <TabBar />
      <Ribbon />
      <div className="flex min-h-0 flex-1">
        <ModelTree />
        <Canvas />
      </div>
      <StatusBar />
    </div>
  );
}
